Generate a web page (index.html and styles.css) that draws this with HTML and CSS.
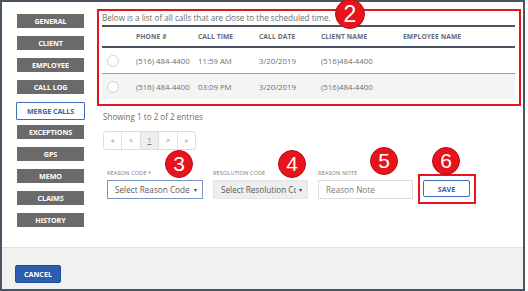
FILE: index.html
```html
<!DOCTYPE html>
<html>
<head>
<meta charset="utf-8">
<link rel="stylesheet" href="styles.css">
</head>
<body>
<div class="frame">
  <div class="main">
    <div class="sidebar">
      <div class="nav-btn">GENERAL</div>
      <div class="nav-btn">CLIENT</div>
      <div class="nav-btn">EMPLOYEE</div>
      <div class="nav-btn">CALL LOG</div>
      <div class="nav-btn active">MERGE CALLS</div>
      <div class="nav-btn">EXCEPTIONS</div>
      <div class="nav-btn">GPS</div>
      <div class="nav-btn">MEMO</div>
      <div class="nav-btn">CLAIMS</div>
      <div class="nav-btn">HISTORY</div>
    </div>
    <div class="content">
      <div class="calls-box">
        <div class="intro">Below is a list of all calls that are close to the scheduled time.</div>
        <div class="grid head">
          <div></div>
          <div>PHONE #</div>
          <div>CALL TIME</div>
          <div>CALL DATE</div>
          <div>CLIENT NAME</div>
          <div>EMPLOYEE NAME</div>
        </div>
        <div class="grid row">
          <div><span class="radio"></span></div>
          <div>(516) 484-4400</div>
          <div>11:59 AM</div>
          <div>3/20/2019</div>
          <div>(516)484-4400</div>
          <div></div>
        </div>
        <div class="grid row alt">
          <div><span class="radio"></span></div>
          <div>(516) 484-4400</div>
          <div>03:09 PM</div>
          <div>3/20/2019</div>
          <div>(516)484-4400</div>
          <div></div>
        </div>
      </div>
      <div class="showing">Showing 1 to 2 of 2 entries</div>
      <div class="pager">
        <div class="pg">«</div>
        <div class="pg">&lt;</div>
        <div class="pg cur">1</div>
        <div class="pg">&gt;</div>
        <div class="pg">»</div>
      </div>
      <div class="form">
        <div class="field">
          <div class="label">REASON CODE *</div>
          <div class="select focus"><span class="sel-text">Select Reason Code</span><span class="caret">▾</span></div>
        </div>
        <div class="field">
          <div class="label">RESOLUTION CODE</div>
          <div class="select disabled"><span class="sel-text">Select Resolution Cc</span><span class="caret">▾</span></div>
        </div>
        <div class="field">
          <div class="label">REASON NOTE</div>
          <div class="input">Reason Note</div>
        </div>
        <div class="save-wrap">
          <div class="save">SAVE</div>
        </div>
      </div>
    </div>
  </div>
  <div class="footer">
    <div class="cancel">CANCEL</div>
  </div>
  <div class="badge b2">2</div>
  <div class="badge b3">3</div>
  <div class="badge b4">4</div>
  <div class="badge b5">5</div>
  <div class="badge b6">6</div>
</div>
</body>
</html>
```

FILE: styles.css
```css
* { box-sizing: border-box; }
html, body { margin: 0; padding: 0; background: #ffffff; }
body { width: 528px; height: 291px; overflow: hidden; }

.frame {
  position: relative;
  width: 525px;
  height: 291px;
  border: 2px solid #4b5461;
  display: flex;
  flex-direction: column;
  font-family: "Open Sans", "Liberation Sans", sans-serif;
  color: #6c6c6c;
}

.main { height: 245px; display: flex; flex: none; }

.sidebar {
  width: 95px;
  flex: none;
  padding: 12px 0 0 15px;
  display: flex;
  flex-direction: column;
}

.nav-btn {
  width: 67px;
  height: 14px;
  margin-bottom: 8px;
  background: #6a6a6a;
  color: #ffffff;
  font-size: 7.2px;
  font-weight: 700;
  display: flex;
  align-items: center;
  justify-content: center;
  letter-spacing: -0.1px;
}
.nav-btn.active {
  width: 69px;
  height: 18px;
  margin-left: -1px;
  margin-bottom: 5px;
  background: #ffffff;
  border: 1px solid #3d6cb6;
  color: #3466b0;
  border-radius: 1px;
}

.content { flex: 1; padding-top: 7px; padding-right: 2px; }

.calls-box {
  border: 2px solid #e8141c;
  padding: 0 4px 5px 3px;
}
.intro {
  font-size: 8.1px;
  line-height: 13px;
  height: 14px;
  color: #6c6c6c;
  white-space: nowrap;
}

.grid {
  display: grid;
  grid-template-columns: 34px 62px 61px 62px 82px 1fr;
  align-items: center;
  font-size: 7.8px;
  white-space: nowrap;
}
.grid.head {
  height: 23px;
  border-top: 2px solid #4b5461;
  border-bottom: 2px solid #4b5461;
  font-size: 6.7px;
  font-weight: 700;
  color: #666a70;
  letter-spacing: 0.1px;
}
.grid.row { height: 25px; color: #6e6e6e; }
.grid.row.alt { height: 26px; border-top: 1px solid #9aa0a8; background: #f4f4f4; }

.radio {
  display: block;
  width: 12px;
  height: 12px;
  margin-left: 5px;
  border: 1px solid #d2d2d2;
  border-radius: 50%;
  background: #ffffff;
}

.showing {
  margin-top: 5px;
  padding-left: 6px;
  font-size: 8.1px;
  line-height: 12px;
  color: #6c6c6c;
}

.pager {
  display: flex;
  width: 93px;
  height: 19px;
  margin: 8px 0 0 6px;
  border: 1px solid #dedede;
  border-radius: 3px;
  overflow: hidden;
}
.pg {
  flex: 1;
  display: flex;
  align-items: center;
  justify-content: center;
  font-size: 7px;
  color: #7a7a7a;
  border-left: 1px solid #dedede;
}
.pg:first-child { border-left: none; }
.pg.cur { background: #eeeeee; text-decoration: underline; }

.form {
  display: flex;
  align-items: flex-start;
  margin-top: 20px;
  padding-left: 10px;
}
.field { width: 96px; margin-right: 10px; }
.field:nth-child(2) { width: 95px; }
.field:nth-child(3) { width: 95px; margin-right: 5px; }
.label {
  font-size: 5.7px;
  line-height: 7px;
  height: 10px;
  color: #7a7a7a;
  letter-spacing: 0.05px;
  white-space: nowrap;
}
.select, .input {
  height: 19px;
  display: flex;
  align-items: center;
  padding: 0 5px 0 7px;
  font-size: 8.2px;
  color: #5a5a5a;
  border: 1px solid #dcdcdc;
  background: #ffffff;
  white-space: nowrap;
}
.select.focus { border-color: #7894c8; }
.select.disabled { background: #eeeeee; border-color: #e4e4e4; }
.sel-text { flex: 1; overflow: hidden; }
.caret { font-size: 6px; margin-left: 3px; color: #444; }
.input { color: #7c7c7c; }

.save-wrap {
  margin-top: 4px;
  border: 2px solid #e8141c;
  padding: 4px 4px 5px 3px;
}
.save {
  width: 47px;
  height: 17px;
  border: 1px solid #3d6cb6;
  border-radius: 2px;
  display: flex;
  align-items: center;
  justify-content: center;
  font-size: 7.2px;
  font-weight: 700;
  color: #3466b0;
}

.footer {
  flex: 1;
  border-top: 1px solid #e2e2e2;
  background: #f1f1f1;
  padding: 17px 0 0 13px;
}
.cancel {
  width: 46px;
  height: 18px;
  background: #2b5fad;
  border: 1px solid #1f4f99;
  border-radius: 2px;
  color: #ffffff;
  font-size: 7.2px;
  font-weight: 700;
  display: flex;
  align-items: center;
  justify-content: center;
}

.badge {
  position: absolute;
  width: 28px;
  height: 28px;
  border-radius: 50%;
  background: #e8131b;
  border: 1px solid #b80e14;
  color: #ffffff;
  font-family: "Liberation Sans", Arial, sans-serif;
  font-size: 21px;
  line-height: 26px;
  text-align: center;
}
.b2 { width: 30px; height: 30px; line-height: 29px; font-size: 23px; left: 333px; top: -3px; }
.b3 { left: 163px; top: 148px; }
.b4 { left: 276px; top: 148px; }
.b5 { left: 368px; top: 145px; }
.b6 { left: 430px; top: 145px; }
```
